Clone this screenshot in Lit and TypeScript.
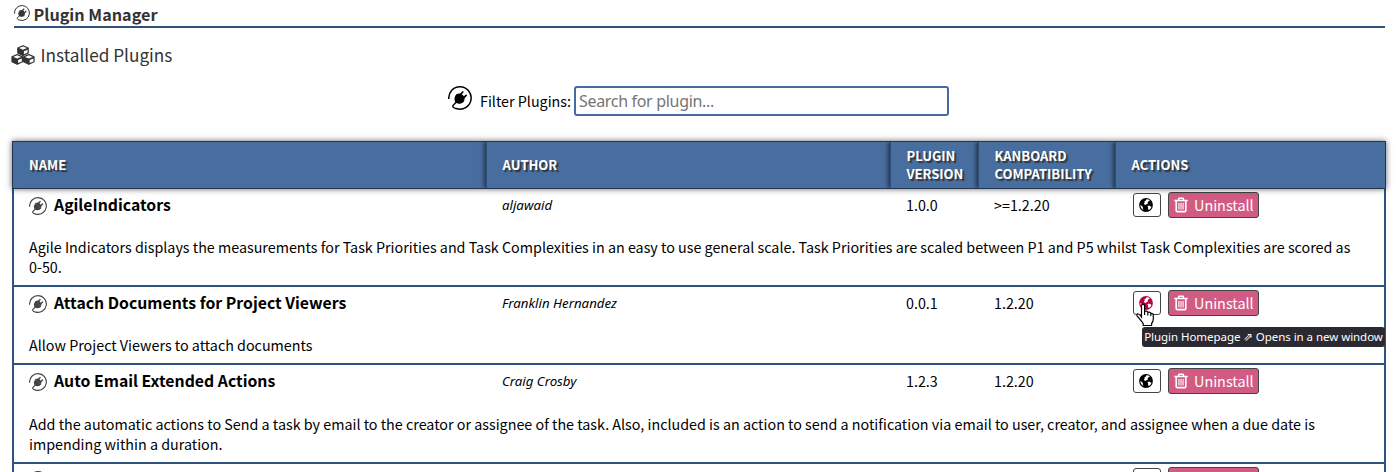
import { LitElement, html, css, svg } from "lit";
import { customElement, property } from "lit/decorators.js";

const plug = html`<svg viewBox="0 0 24 24" fill="none" stroke="currentColor">
  <path d="M.8 13A11.2 11.2 0 1 1 9 22.8Q5.2 22 4.8 20.6Q4.7 19.4 6.4 18L8.6 15.8" stroke-width="1.5"/>
  <path d="M8.6 7.9L16.2 15.3Q14.4 17.9 11.4 17.7Q9.4 17.7 8.2 16.8L6.9 15.4Q5.5 11.5 8.6 7.9Z" fill="currentColor" stroke="none"/>
  <path d="M8.4 8.2Q12.3 6.4 14.9 9.1Q17.5 11.8 16 15.4Z" fill="currentColor" stroke="none"/>
  <path d="M12 8.9L14.8 6M15.2 12.3L18.1 9.4" stroke-width="1.7" stroke-linecap="round"/>
</svg>`;

const cubes = html`<svg viewBox="0 0 24 20" fill="currentColor" stroke="currentColor" stroke-linejoin="round">
  ${[[12, 0.8], [6.2, 9.6], [17.8, 9.6]].map(([x, y]) => svg`<g transform="translate(${x} ${y})">
    <path d="M0 0L5.2 2.2V7.2L0 9.7L-5.2 7.2V2.2Z" stroke-width="1.2"/>
    <path d="M0 .7L3.9 2.3L0 3.9L-3.9 2.3Z" fill="#fff" stroke="none"/>
    <path d="M.9 5.5L4.6 3.9V6.8L.9 8.5Z" fill="#fff" stroke="none"/>
  </g>`)}
</svg>`;

const globe = html`<svg viewBox="0 0 14 14">
  <circle cx="7" cy="7" r="6.9" fill="currentColor"/>
  <path d="M7.4 1.3L9.6 1.6L11 2.6L9.6 3.2L8.6 4.2L9.2 5.2L7.8 5.9L6.7 7.1L5.4 6.6L4.9 5.4L5.8 4.4L5.3 3.5L6.8 2.6ZM1.3 6.8L2.8 7.9L3.9 9.1L3.8 10.4L4.5 12.1Q1.5 10.6 1.3 6.8ZM8.4 8.2L10 7.6L11.9 8.5L12.5 8.9Q11.6 11.2 9.8 12.1L9 11.1L9.2 9.8Z" fill="#fff"/>
</svg>`;

const trash = html`<svg viewBox="0 0 14 16" fill="none" stroke="currentColor">
  <path d="M.3 3.6H13.7M4.2 3.4L5 1.2H9L9.8 3.4" stroke-width="1.5"/>
  <path d="M2.2 3.8V13.4Q2.2 14.6 3.3 14.6H10.7Q11.8 14.6 11.8 13.4V3.8" stroke-width="1.6"/>
  <path d="M4.9 6V12.4M7 6V12.4M9.1 6V12.4" stroke-width="1.1"/>
</svg>`;

interface Plugin {
  name: string;
  author: string;
  version: string;
  compat: string;
  lines: string[];
  hovered?: boolean;
}

const plugins: Plugin[] = [
  { name: "AgileIndicators", author: "aljawaid", version: "1.0.0", compat: ">=1.2.20",
    lines: ["Agile Indicators displays the measurements for Task Priorities and Task Complexities in an easy to use general scale. Task Priorities are scaled between P1 and P5 whilst Task Complexities are scored as", "0-50."] },
  { name: "Attach Documents for Project Viewers", author: "Franklin Hernandez", version: "0.0.1", compat: "1.2.20",
    lines: ["Allow Project Viewers to attach documents"], hovered: true },
  { name: "Auto Email Extended Actions", author: "Craig Crosby", version: "1.2.3", compat: "1.2.20",
    lines: ["Add the automatic actions to Send a task by email to the creator or assignee of the task. Also, included is an action to send a notification via email to user, creator, and assignee when a due date is", "impending within a duration."] },
  { name: "", author: "", version: "", compat: "", lines: [] },
];

const grid = css`
  .grid { display: grid; grid-template-columns: 473px 404px 88px 137px 1fr; }
`;

@customElement("plugin-row")
class PluginRow extends LitElement {
  @property({ attribute: false }) plugin!: Plugin;
  static styles = [grid, css`
    :host { display: block; border-bottom: 2px solid #30527f; }
    .grid { height: 32px; align-items: center; font-size: 14.32px; line-height: 20px; }
    .grid > * { padding-left: 16px; white-space: nowrap; }
    .name { display: flex; align-items: center; gap: 7px; font-weight: 700; font-size: 15.8px; }
    .name svg { width: 18px; height: 18px; color: #444; margin-top: 1px; }
    .author { font: italic 13.25px/20px "Noto Sans", sans-serif; }
    .actions { display: flex; gap: 7px; align-items: center; }
    .grid > .actions { padding-left: 18px; }
    .home { position: relative; box-sizing: border-box; width: 28px; height: 24px; border: 1px solid #444; border-radius: 3px; display: grid; place-items: center; background: #fff; }
    .home svg { width: 14px; height: 14px; margin-right: 2px; }
    .hovered { color: #b3063f; }
    .remove { box-sizing: border-box; width: 91px; height: 26px; border: 1px solid #444; border-radius: 3px; background: #d15b83; color: #fff; display: flex; align-items: center; gap: 6px; padding-left: 5px; font-size: 14.4px; }
    .remove svg { width: 14px; height: 16px; }
    .desc { padding: 16.2px 16px 8px; font-size: 14.32px; line-height: 20px; white-space: nowrap; }
    .tip { position: absolute; z-index: 2; left: 8px; top: 34.5px; width: 243px; height: 20px; box-sizing: border-box; border-radius: 3px; background: #2b2a33; color: #fff; font: 11.5px/19px "Noto Sans", "DejaVu Sans", sans-serif; letter-spacing: -.05px; text-align: center; white-space: nowrap; }
    .cursor { position: absolute; z-index: 3; left: 1px; top: 11px; }
    .home .cursor { width: 20px; height: 24px; margin: 0; }
  `];
  render() {
    const p = this.plugin;
    return html`<div class="grid">
        <div class="name">${plug}<span>${p.name}</span></div>
        <div class="author">${p.author}</div>
        <div>${p.version}</div>
        <div>${p.compat}</div>
        <div class="actions">
          <div class="home ${p.hovered ? "hovered" : ""}">${globe}
            ${p.hovered ? html`<div class="tip">Plugin Homepage ⇗ Opens in a new window</div>
              <svg class="cursor" viewBox="0 0 20 24"><path d="M6.5 14V3Q6.5 1.2 8 1.2T9.6 3V8.3Q12.6 7.6 12.9 9.3Q15.3 8.6 15.7 10.4Q18.3 10 18.3 12.3V16Q18.2 18.6 16.6 20.5V22.5H8.2V20.5L5.6 17.2L2.3 13.2Q1.2 11.5 2.6 10.8Q4.2 10.4 6.5 14ZM9.6 8.5V12M12.8 9.5V12.5M15.8 10.5V13" fill="#fff" stroke="#000" stroke-width="1.2"/></svg>` : ""}
          </div>
          <div class="remove">${trash}${p.name ? html`<span>Uninstall</span>` : ""}</div>
        </div>
      </div>
      <div class="desc">${p.lines.map((l) => html`<div>${l}</div>`)}</div>`;
  }
}

@customElement("app-root")
class AppRoot extends LitElement {
  static styles = [grid, css`
    :host { display: block; height: 472px; overflow: hidden; background: #fff; color: #000; font-family: "Noto Sans CJK SC", sans-serif; }
    h1 { margin: 0 13px 0 14px; height: 26px; border-bottom: 2px solid #2f527d; display: flex; align-items: center; gap: 3.5px; color: #333; font-size: 16.2px; line-height: 26px; }
    h1 span { padding-top: 1px; }
    h1 svg { width: 16px; height: 16px; }
    h2 { margin: 0 0 2px 11px; height: 54px; display: flex; align-items: center; gap: 5.5px; color: #333; font-size: 17.2px; font-weight: 400; line-height: 24px; }
    h2 svg { width: 24px; height: 20px; }
    .filter { display: flex; align-items: center; height: 34px; padding-left: 448px; font-size: 14.32px; line-height: 20px; }
    .filter svg { width: 24px; height: 24px; margin: 0 8px 6px 0; }
    .filter .label { width: 94px; white-space: nowrap; }
    input { box-sizing: border-box; width: 375px; height: 30px; border: 2px solid #466c9f; border-radius: 3px; padding: 0 3px; background: #fff; font: 16px "Noto Sans", sans-serif; letter-spacing: -.32px; outline: 0; }
    input::placeholder { color: #757575; opacity: 1; }
    .table { margin: 23px 12px 0; }
    .head { position: relative; height: 48px; box-sizing: border-box; border: 1px solid #24364f; background: #486e9f; color: #fff; font-size: 13px; font-weight: 700; line-height: 18px; box-shadow: 0 0 6px #0009; }
    .head > div { display: flex; align-items: center; padding-left: 16px; text-shadow: 2px 2px 1px #333; }
    .head > div + div { box-shadow: -2px 0 4px #0008; clip-path: inset(0 0 0 -8px); border-left: 1px solid #2f4d75; padding-left: 15.5px; }
    .body { border: solid #30527f; border-width: 0 2px; }
    .body plugin-row { margin-left: -1px; }
  `];
  render() {
    return html`<h1>${plug}<span>Plugin Manager</span></h1>
      <h2>${cubes}<span>Installed Plugins</span></h2>
      <div class="filter">${plug}<span class="label">Filter Plugins:</span><input placeholder="Search for plugin..." /></div>
      <div class="table">
        <div class="head grid">
          <div>NAME</div><div>AUTHOR</div><div>PLUGIN<br />VERSION</div><div>KANBOARD<br />COMPATIBILITY</div><div>ACTIONS</div>
        </div>
        <div class="body">${plugins.map((p) => html`<plugin-row .plugin=${p}></plugin-row>`)}</div>
      </div>`;
  }
}
